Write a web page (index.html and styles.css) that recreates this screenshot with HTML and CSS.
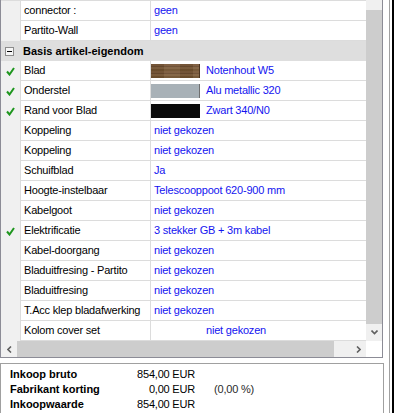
FILE: index.html
```html
<!DOCTYPE html>
<html lang="nl">
<head>
  <meta charset="UTF-8">
  <title>Artikel-eigendommen</title>
  <link rel="stylesheet" href="styles.css">
</head>
<body>
  <div class="window">
    <div class="main">
      <div class="grid">
        <div class="grid-body">
          <div class="rows">
            <div class="row"><div class="gutter"></div><div class="label">connector :</div><div class="value">geen</div></div>
            <div class="row"><div class="gutter"></div><div class="label">Partito-Wall</div><div class="value">geen</div></div>

            <div class="group">
              <span class="toggle"></span>
              <span class="group-title">Basis artikel-eigendom</span>
            </div>

            <div class="row">
              <div class="gutter"><svg class="check" width="9" height="9" viewBox="0 0 9 9"><path d="M1 4.5 L3.5 7.5 L8 1"/></svg></div>
              <div class="label">Blad</div>
              <div class="value with-swatch"><span class="swatch wood"></span>Notenhout W5</div>
            </div>
            <div class="row">
              <div class="gutter"><svg class="check" width="9" height="9" viewBox="0 0 9 9"><path d="M1 4.5 L3.5 7.5 L8 1"/></svg></div>
              <div class="label">Onderstel</div>
              <div class="value with-swatch"><span class="swatch alu"></span>Alu metallic 320</div>
            </div>
            <div class="row">
              <div class="gutter"><svg class="check" width="9" height="9" viewBox="0 0 9 9"><path d="M1 4.5 L3.5 7.5 L8 1"/></svg></div>
              <div class="label">Rand voor Blad</div>
              <div class="value with-swatch"><span class="swatch black"></span>Zwart 340/N0</div>
            </div>
            <div class="row"><div class="gutter"></div><div class="label">Koppeling</div><div class="value">niet gekozen</div></div>
            <div class="row"><div class="gutter"></div><div class="label">Koppeling</div><div class="value">niet gekozen</div></div>
            <div class="row"><div class="gutter"></div><div class="label">Schuifblad</div><div class="value">Ja</div></div>
            <div class="row"><div class="gutter"></div><div class="label">Hoogte-instelbaar</div><div class="value">Telescooppoot 620-900 mm</div></div>
            <div class="row"><div class="gutter"></div><div class="label">Kabelgoot</div><div class="value">niet gekozen</div></div>
            <div class="row">
              <div class="gutter"><svg class="check" width="9" height="9" viewBox="0 0 9 9"><path d="M1 4.5 L3.5 7.5 L8 1"/></svg></div>
              <div class="label">Elektrificatie</div>
              <div class="value">3 stekker GB + 3m kabel</div>
            </div>
            <div class="row"><div class="gutter"></div><div class="label">Kabel-doorgang</div><div class="value">niet gekozen</div></div>
            <div class="row"><div class="gutter"></div><div class="label">Bladuitfresing - Partito</div><div class="value">niet gekozen</div></div>
            <div class="row"><div class="gutter"></div><div class="label">Bladuitfresing</div><div class="value">niet gekozen</div></div>
            <div class="row"><div class="gutter"></div><div class="label">T.Acc klep bladafwerking</div><div class="value">niet gekozen</div></div>
            <div class="row"><div class="gutter"></div><div class="label">Kolom cover set</div><div class="value with-swatch"><span class="swatch empty"></span>niet gekozen</div></div>
          </div>

          <div class="vscroll">
            <div class="vthumb"></div>
            <div class="varrow">
              <svg width="7" height="5" viewBox="0 0 7 5"><path d="M0.5 0.5 L3.5 3.5 L6.5 0.5"/></svg>
            </div>
          </div>
        </div>

        <div class="hbar">
          <div class="harrow">
            <svg width="5" height="7" viewBox="0 0 5 7"><path d="M4 0.5 L1 3.5 L4 6.5"/></svg>
          </div>
          <div class="hthumb"></div>
          <div class="htrack"></div>
          <div class="harrow">
            <svg width="5" height="7" viewBox="0 0 5 7"><path d="M1 0.5 L4 3.5 L1 6.5"/></svg>
          </div>
          <div class="corner"></div>
        </div>
      </div>

      <div class="summary">
        <div class="sum-row"><span class="sum-label">Inkoop bruto</span><span class="sum-value">854,00 EUR</span></div>
        <div class="sum-row"><span class="sum-label">Fabrikant korting</span><span class="sum-value">0,00 EUR</span><span class="sum-extra">(0,00 %)</span></div>
        <div class="sum-row"><span class="sum-label">Inkoopwaarde</span><span class="sum-value">854,00 EUR</span></div>
      </div>
    </div>
    <div class="edge"></div>
  </div>
</body>
</html>
```

FILE: styles.css
```css
html,
body {
  margin: 0;
  padding: 0;
  background-color: #fff;
}

body {
  font-family: "Liberation Sans", Arial, sans-serif;
  font-size: 11px;
  color: #000;
  overflow: hidden;
}

.window {
  display: flex;
  height: 413px;
}

.main {
  width: 384px;
  display: flex;
  flex-direction: column;
}

.edge {
  width: 2px;
  margin-left: 5px;
  border-left: 1px solid #a0a0a0;
  border-right: 2px solid #000;
}

/* property grid */

.grid {
  width: 383px;
  box-sizing: border-box;
  border-left: 1px solid #8c8c96;
  border-right: 1px solid #8c8c96;
  border-bottom: 1px solid #8c8c96;
}

.grid-body {
  display: flex;
}

.rows {
  width: 365px;
  border-top: 1px solid #dcdcdc;
}

.row {
  display: flex;
  height: 20px;
  line-height: 19px;
  letter-spacing: -0.2px;
  white-space: nowrap;
}

.gutter {
  width: 20px;
  box-sizing: border-box;
  border-right: 1px solid #dcdcdc;
  background-color: #f0f0f0;
  display: flex;
  align-items: center;
  justify-content: center;
}

.label {
  width: 130px;
  box-sizing: border-box;
  padding-left: 3px;
  border-right: 1px solid #dcdcdc;
  border-bottom: 1px solid #dcdcdc;
  overflow: hidden;
}

.value {
  flex: 1;
  padding-left: 3px;
  color: #1414f0;
  border-bottom: 1px solid #dcdcdc;
  overflow: hidden;
}

.value.with-swatch {
  display: flex;
  align-items: flex-start;
  padding-left: 0;
}

.swatch {
  width: 49px;
  height: 14px;
  margin-top: 3px;
  margin-right: 6px;
  box-sizing: border-box;
  flex-shrink: 0;
}

.swatch.wood {
  background:
    repeating-linear-gradient(90deg, rgba(0, 0, 0, 0.06) 0 13px, rgba(255, 255, 255, 0.05) 13px 29px),
    repeating-linear-gradient(180deg, #7a593a 0 2px, #6a4b30 2px 3px, #80603f 3px 5px, #70512f 5px 7px);
  border-right: 1px solid #4a3320;
}

.swatch.alu {
  background-color: #a8b1b7;
  border-right: 1px solid #707070;
}

.swatch.black {
  background-color: #0a0a0a;
}

.swatch.empty {
  background: none;
}

.check path {
  fill: none;
  stroke: #1e961e;
  stroke-width: 2;
}

.group {
  display: flex;
  align-items: center;
  height: 20px;
  background-color: #dedede;
}

.toggle {
  position: relative;
  width: 9px;
  height: 9px;
  margin-left: 4px;
  margin-right: 9px;
  box-sizing: border-box;
  border: 1px solid #8c8c8c;
  background-color: #f6f6f6;
}

.toggle::after {
  content: "";
  position: absolute;
  left: 1px;
  top: 3px;
  width: 5px;
  height: 1px;
  background-color: #000;
}

.group-title {
  font-weight: bold;
}

/* scrollbars */

.vscroll {
  width: 16px;
  background-color: #f0f0f0;
  display: flex;
  flex-direction: column;
}

.vthumb {
  margin-top: 10px;
  height: 314px;
  background-color: #cdcdcd;
}

.varrow {
  height: 17px;
  display: flex;
  align-items: center;
  justify-content: center;
}

.hbar {
  display: flex;
  height: 16px;
}

.harrow {
  width: 16px;
  background-color: #f0f0f0;
  display: flex;
  align-items: center;
  justify-content: center;
}

.hthumb {
  width: 317px;
  background-color: #cdcdcd;
}

.htrack {
  width: 16px;
  background-color: #f0f0f0;
}

.corner {
  width: 16px;
  background-color: #fff;
}

.vscroll svg path,
.hbar svg path {
  fill: none;
  stroke: #606060;
  stroke-width: 1.6;
}

/* totals */

.summary {
  flex: 1;
  margin-top: 5px;
  padding: 3px 0 0 9px;
  border: 1px solid #a0a0a0;
  border-bottom: none;
}

.sum-row {
  display: flex;
  line-height: 15px;
  white-space: nowrap;
}

.sum-label {
  width: 121px;
  font-weight: bold;
}

.sum-value {
  width: 64px;
  text-align: right;
  letter-spacing: -0.2px;
}

.sum-extra {
  margin-left: 19px;
  color: #2a2a2a;
  letter-spacing: -0.2px;
}
```
